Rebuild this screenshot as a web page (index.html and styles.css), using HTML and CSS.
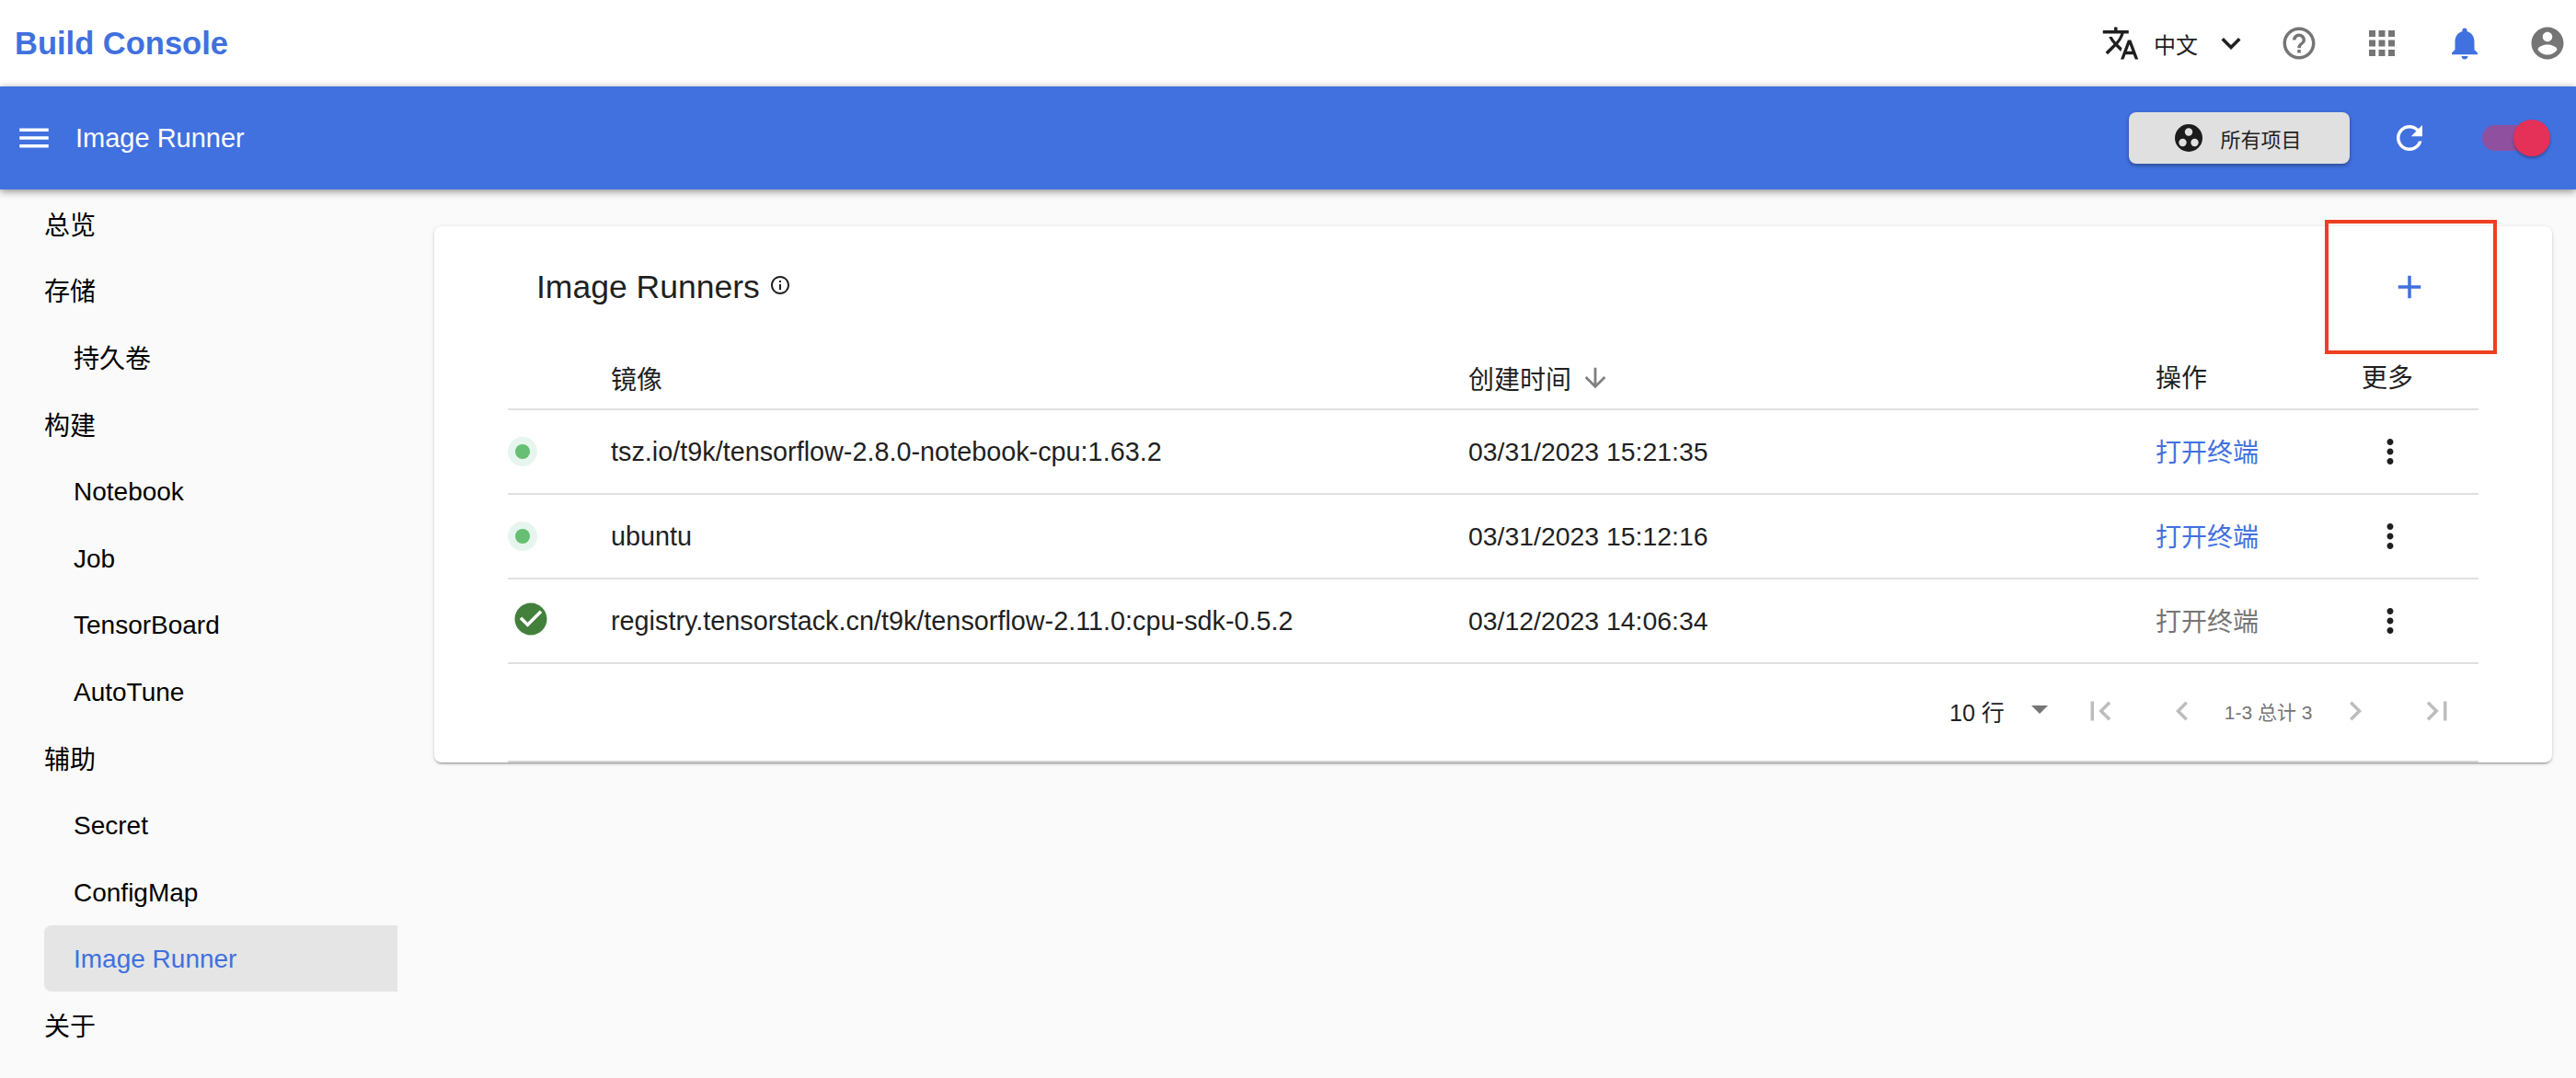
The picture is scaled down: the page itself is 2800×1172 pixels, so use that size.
FILE: index.html
```html
<!DOCTYPE html>
<html lang="zh">

<head>
    <meta charset="UTF-8">
    <title>Image Runner</title>
    <link rel="stylesheet" href="styles.css">
</head>

<body>
    <!-- barra superiore -->
    <header class="topbar">
        <div class="brand">Build Console</div>
        <div class="top-actions">
            <svg class="icon icon-dark" viewBox="0 0 24 24"><path d="M12.87 15.07l-2.54-2.51.03-.03c1.74-1.94 2.98-4.17 3.71-6.53H17V4h-7V2H8v2H1v1.99h11.17C11.5 7.92 10.44 9.75 9 11.35 8.07 10.32 7.3 9.19 6.69 8h-2c.73 1.63 1.73 3.17 2.98 4.56l-5.09 5.02L4 19l5-5 3.11 3.11.76-2.04zM18.5 10h-2L12 22h2l1.12-3h4.75L21 22h2l-4.5-12zm-2.62 7l1.62-4.33L19.12 17h-3.24z"/></svg>
            <span class="lang">中文</span>
            <svg class="icon icon-dark chevron" viewBox="0 0 24 24"><path d="M16.59 8.59L12 13.17 7.41 8.59 6 10l6 6 6-6z"/></svg>
            <svg class="icon icon-gray help" viewBox="0 0 24 24"><path d="M11 18h2v-2h-2v2zm1-16C6.48 2 2 6.48 2 12s4.48 10 10 10 10-4.48 10-10S17.52 2 12 2zm0 18c-4.41 0-8-3.59-8-8s3.59-8 8-8 8 3.59 8 8-3.59 8-8 8zm0-14c-2.21 0-4 1.79-4 4h2c0-1.1.9-2 2-2s2 .9 2 2c0 2-3 1.75-3 5h2c0-2.25 3-2.5 3-5 0-2.21-1.79-4-4-4z"/></svg>
            <svg class="icon icon-gray wide" viewBox="0 0 24 24"><path d="M4 8h4V4H4v4zm6 12h4v-4h-4v4zm-6 0h4v-4H4v4zm0-6h4v-4H4v4zm6 0h4v-4h-4v4zm6-10v4h4V4h-4zm-6 4h4V4h-4v4zm6 6h4v-4h-4v4zm0 6h4v-4h-4v4z"/></svg>
            <svg class="icon icon-blue wide" viewBox="0 0 24 24"><path d="M12 22c1.1 0 2-.9 2-2h-4c0 1.1.89 2 2 2zm6-6v-5c0-3.07-1.64-5.64-4.5-6.32V4c0-.83-.67-1.5-1.5-1.5s-1.5.67-1.5 1.5v.68C7.63 5.36 6 7.92 6 11v5l-2 2v1h16v-1l-2-2z"/></svg>
            <svg class="icon icon-gray wide" viewBox="0 0 24 24"><path d="M12 2C6.48 2 2 6.48 2 12s4.48 10 10 10 10-4.48 10-10S17.52 2 12 2zm0 3c1.66 0 3 1.34 3 3s-1.34 3-3 3-3-1.34-3-3 1.34-3 3-3zm0 14.2c-2.5 0-4.71-1.28-6-3.22.03-1.99 4-3.08 6-3.08 1.99 0 5.97 1.09 6 3.08-1.29 1.94-3.5 3.22-6 3.22z"/></svg>
        </div>
    </header>

    <!-- barra blu -->
    <div class="appbar">
        <svg class="icon icon-white menu" viewBox="0 0 24 24"><path d="M3 18h18v-2H3v2zm0-5h18v-2H3v2zm0-7v2h18V6H3z"/></svg>
        <div class="appbar-title">Image Runner</div>
        <button class="project-btn">
            <svg class="project-icon" viewBox="0 0 30 30">
                <circle cx="15" cy="15" r="15" fill="#1c1c1c"/>
                <circle cx="15" cy="8.5" r="4.2" fill="#e0e0e0"/>
                <circle cx="8.5" cy="20" r="4.2" fill="#e0e0e0"/>
                <circle cx="21.5" cy="20" r="4.2" fill="#e0e0e0"/>
            </svg>
            所有项目
        </button>
        <svg class="icon icon-white refresh" viewBox="0 0 24 24"><path d="M17.65 6.35C16.2 4.9 14.21 4 12 4c-4.42 0-7.99 3.58-7.99 8s3.57 8 7.99 8c3.73 0 6.84-2.55 7.73-6h-2.08c-.82 2.33-3.04 4-5.65 4-3.31 0-6-2.69-6-6s2.69-6 6-6c1.66 0 3.14.69 4.22 1.78L13 11h7V4l-2.35 2.35z"/></svg>
        <div class="switch">
            <div class="switch-track"></div>
            <div class="switch-thumb"></div>
        </div>
    </div>

    <div class="main">
        <nav class="sidebar">
            <div class="nav-head">总览</div>
            <div class="nav-head">存储</div>
            <div class="nav-sub">持久卷</div>
            <div class="nav-head">构建</div>
            <div class="nav-sub latin">Notebook</div>
            <div class="nav-sub latin">Job</div>
            <div class="nav-sub latin">TensorBoard</div>
            <div class="nav-sub latin">AutoTune</div>
            <div class="nav-head">辅助</div>
            <div class="nav-sub latin">Secret</div>
            <div class="nav-sub latin">ConfigMap</div>
            <div class="nav-sub latin active">Image Runner</div>
            <div class="nav-head">关于</div>
        </nav>

        <section class="card">
            <div class="card-head">
                <h2 class="card-title">Image Runners</h2>
                <svg class="info" viewBox="0 0 24 24"><path d="M11 7h2v2h-2zm0 4h2v6h-2zm1-9C6.48 2 2 6.48 2 12s4.48 10 10 10 10-4.48 10-10S17.52 2 12 2zm0 18c-4.41 0-8-3.59-8-8s3.59-8 8-8 8 3.59 8 8-3.59 8-8 8z"/></svg>
                <svg class="icon icon-blue add" viewBox="0 0 24 24"><path d="M19 13h-6v6h-2v-6H5v-2h6V5h2v6h6v2z"/></svg>
            </div>
            <div class="mark"></div>

            <div class="table">
                <div class="row row-head">
                    <div></div>
                    <div class="th">镜像</div>
                    <div class="th th-sort">创建时间
                        <svg class="sort" viewBox="0 0 24 24"><path d="M20 12l-1.41-1.41L13 16.17V4h-2v12.17l-5.58-5.59L4 12l8 8 8-8z"/></svg>
                    </div>
                    <div class="th th-up">操作</div>
                    <div class="th th-up">更多</div>
                </div>
                <div class="row">
                    <div><span class="status"><span class="status-dot"></span></span></div>
                    <div class="image">tsz.io/t9k/tensorflow-2.8.0-notebook-cpu:1.63.2</div>
                    <div class="date">03/31/2023 15:21:35</div>
                    <div class="link">打开终端</div>
                    <div><svg class="icon icon-dark kebab" viewBox="0 0 24 24"><path d="M12 8c1.1 0 2-.9 2-2s-.9-2-2-2-2 .9-2 2 .9 2 2 2zm0 2c-1.1 0-2 .9-2 2s.9 2 2 2 2-.9 2-2-.9-2-2-2zm0 6c-1.1 0-2 .9-2 2s.9 2 2 2 2-.9 2-2-.9-2-2-2z"/></svg></div>
                </div>
                <div class="row">
                    <div><span class="status"><span class="status-dot"></span></span></div>
                    <div class="image">ubuntu</div>
                    <div class="date">03/31/2023 15:12:16</div>
                    <div class="link">打开终端</div>
                    <div><svg class="icon icon-dark kebab" viewBox="0 0 24 24"><path d="M12 8c1.1 0 2-.9 2-2s-.9-2-2-2-2 .9-2 2 .9 2 2 2zm0 2c-1.1 0-2 .9-2 2s.9 2 2 2 2-.9 2-2-.9-2-2-2zm0 6c-1.1 0-2 .9-2 2s.9 2 2 2 2-.9 2-2-.9-2-2-2z"/></svg></div>
                </div>
                <div class="row">
                    <div><svg class="icon done" viewBox="0 0 24 24"><circle cx="12" cy="12" r="7" fill="#fff"/><path d="M12 2C6.48 2 2 6.48 2 12s4.48 10 10 10 10-4.48 10-10S17.52 2 12 2zm-2 15l-5-5 1.41-1.41L10 14.17l7.59-7.59L19 8l-9 9z"/></svg></div>
                    <div class="image">registry.tensorstack.cn/t9k/tensorflow-2.11.0:cpu-sdk-0.5.2</div>
                    <div class="date">03/12/2023 14:06:34</div>
                    <div class="link link-off">打开终端</div>
                    <div><svg class="icon icon-dark kebab" viewBox="0 0 24 24"><path d="M12 8c1.1 0 2-.9 2-2s-.9-2-2-2-2 .9-2 2 .9 2 2 2zm0 2c-1.1 0-2 .9-2 2s.9 2 2 2 2-.9 2-2-.9-2-2-2zm0 6c-1.1 0-2 .9-2 2s.9 2 2 2 2-.9 2-2-.9-2-2-2z"/></svg></div>
                </div>

                <div class="pager">
                    <span class="pager-rows">10 行</span>
                    <span class="pager-caret"></span>
                    <svg class="icon icon-off pg-first" viewBox="0 0 24 24"><path d="M18.41 16.59L13.82 12l4.59-4.59L17 6l-6 6 6 6zM6 6h2v12H6z"/></svg>
                    <svg class="icon icon-off pg-prev" viewBox="0 0 24 24"><path d="M15.41 7.41L14 6l-6 6 6 6 1.41-1.41L10.83 12z"/></svg>
                    <span class="pager-count">1-3 总计 3</span>
                    <svg class="icon icon-off pg-next" viewBox="0 0 24 24"><path d="M10 6L8.59 7.41 13.17 12l-4.58 4.59L10 18l6-6z"/></svg>
                    <svg class="icon icon-off pg-last" viewBox="0 0 24 24"><path d="M5.59 7.41L10.18 12l-4.59 4.59L7 18l6-6-6-6zM16 6h2v12h-2z"/></svg>
                </div>
            </div>
        </section>
    </div>
</body>

</html>
```

FILE: styles.css
```css
* {
    box-sizing: border-box;
}

body {
    margin: 0;
    height: 1172px;
    overflow: hidden;
    background-color: #fafafa;
    color: #1f1f1f;
    font-family: "Liberation Sans", "Noto Sans CJK SC", sans-serif;
    font-size: 28px;
}

.icon {
    width: 42px;
    height: 42px;
    flex: none;
    display: block;
}
.icon-dark {
    fill: #1f1f1f;
}
.icon-gray {
    fill: #757575;
}
.icon-blue {
    fill: #4170df;
}
.icon-white {
    fill: #fff;
}
.icon-off {
    fill: #bdbdbd;
}

/* barra superiore */
.topbar {
    height: 94px;
    background-color: #fff;
    display: flex;
    align-items: center;
    justify-content: space-between;
    padding: 0 10px 0 16px;
}

.brand {
    color: #4170df;
    font-size: 34.5px;
    font-weight: bold;
}

.top-actions {
    display: flex;
    align-items: center;
}

.lang {
    font-size: 24px;
    margin-left: 15px;
    color: #1f1f1f;
}

.chevron {
    margin-left: 15px;
}

.help {
    margin-left: 32px;
}

.wide {
    margin-left: 48px;
}

/* barra blu */
.appbar {
    height: 112px;
    background-color: #4170df;
    display: flex;
    align-items: center;
    padding: 0 28px 0 16px;
    box-shadow: 0 3px 8px rgba(0, 0, 0, 0.35), 0 -1px 6px rgba(0, 0, 0, 0.12);
    position: relative;
}

.appbar-title {
    color: #fff;
    font-size: 29px;
    margin-left: 24px;
    flex: 1;
}

.project-btn {
    width: 240px;
    height: 56px;
    border: 0;
    padding: 0 2px 0 0;
    border-radius: 8px;
    background-color: #e0e0e0;
    color: #1f1f1f;
    font-family: inherit;
    font-size: 22px;
    display: flex;
    align-items: center;
    justify-content: center;
    gap: 19px;
    box-shadow: 0 2px 4px rgba(0, 0, 0, 0.35);
}

.project-icon {
    width: 30px;
    height: 30px;
}

.refresh {
    margin-left: 44px;
}

.switch {
    position: relative;
    width: 74px;
    height: 40px;
    margin-left: 58px;
}

.switch-track {
    position: absolute;
    top: 6px;
    left: 0;
    width: 68px;
    height: 28px;
    border-radius: 14px;
    background-color: #8f509f;
}

.switch-thumb {
    position: absolute;
    top: 0;
    right: 0;
    width: 40px;
    height: 40px;
    border-radius: 50%;
    background-color: #e53058;
    box-shadow: 0 2px 3px rgba(0, 0, 0, 0.3);
}

/* menu laterale */
.main {
    display: flex;
}

.sidebar {
    width: 472px;
    flex: none;
    padding: 1px 40px 0 48px;
    color: #000;
}

.nav-head,
.nav-sub {
    height: 72.6px;
    display: flex;
    align-items: center;
    padding-bottom: 1px;
}

.nav-sub {
    padding-left: 32px;
}

.nav-sub.latin {
    padding-bottom: 0;
    padding-top: 3px;
}

.nav-sub.active {
    background-color: #e5e5e5;
    border-radius: 8px 0 0 8px;
    color: #4170df;
}

/* card */
.card {
    position: relative;
    width: 2302px;
    height: 583px;
    margin-top: 40px;
    background-color: #fff;
    border-radius: 8px;
    box-shadow: 0 3px 1px -2px rgba(0, 0, 0, 0.2), 0 2px 2px rgba(0, 0, 0, 0.14), 0 1px 5px rgba(0, 0, 0, 0.12);
}

.card-head {
    height: 132px;
    display: flex;
    align-items: center;
    padding: 0 134px 0 111px;
}

.card-title {
    margin: 0;
    font-size: 35.5px;
    font-weight: normal;
}

.info {
    width: 24px;
    height: 24px;
    margin: 0 0 4px 10px;
    fill: #1f1f1f;
}

.add {
    margin-left: auto;
}

/* riquadro rosso sopra al pulsante */
.mark {
    position: absolute;
    top: -7px;
    left: 2055px;
    width: 187px;
    height: 146px;
    border: 4px solid #ee3f22;
}

/* tabella */
.table {
    margin: 0 80px;
}

.row {
    display: grid;
    grid-template-columns: 112px 932px 747px 224px 127px;
    align-items: center;
    height: 92px;
    border-bottom: 2px solid #e0e0e0;
}

.row-head {
    height: 68px;
}

.th-sort {
    display: flex;
    align-items: center;
    gap: 9px;
}

.th-up {
    padding-bottom: 5px;
}

.sort {
    width: 34px;
    height: 34px;
    fill: #808080;
}

.image {
    font-size: 28.8px;
}

.date {
    font-size: 28.4px;
}

.link {
    color: #4170df;
    padding-bottom: 3px;
}

.link.link-off {
    color: #757575;
}

.status {
    width: 32px;
    height: 32px;
    border-radius: 50%;
    background-color: #e6f5ee;
    display: flex;
    align-items: center;
    justify-content: center;
}

.status-dot {
    width: 16px;
    height: 16px;
    border-radius: 50%;
    background-color: #66bf72;
}

.done {
    fill: #43803c;
    margin: 0 0 4px 4px;
}

.kebab {
    margin-left: 10px;
}

/* paginazione */
.pager {
    height: 107px;
    display: flex;
    align-items: center;
    padding: 0 0 3px 1567px;
    border-bottom: 2px solid #d5d5d5;
}

.pager-rows {
    font-size: 25px;
}

.pager-caret {
    width: 0;
    height: 0;
    border-left: 9px solid transparent;
    border-right: 9px solid transparent;
    border-top: 9px solid #757575;
    margin: 0 0 4px 29px;
}

.pg-first {
    margin-left: 36px;
}

.pg-prev {
    margin-left: 47px;
}

.pager-count {
    font-size: 21px;
    color: #757575;
    margin-left: 25px;
}

.pg-next {
    margin-left: 26px;
}

.pg-last {
    margin-left: 47px;
}
```
